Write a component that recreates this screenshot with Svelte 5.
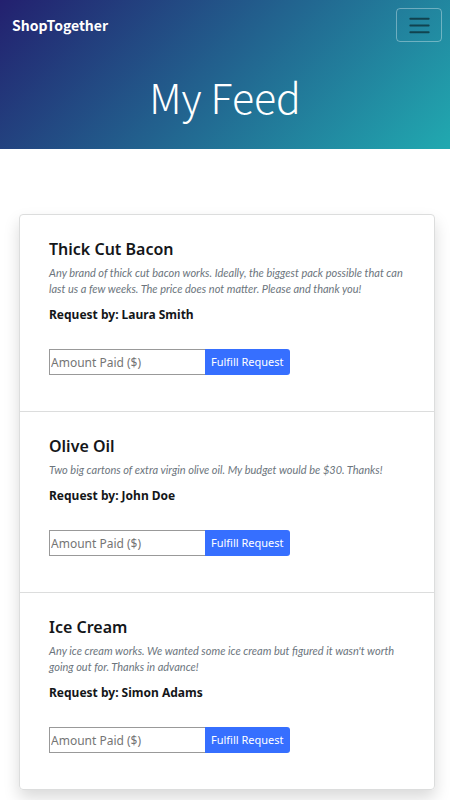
<script>
  const requests = [
    {
      id: 1,
      item: 'Thick Cut Bacon',
      details:
        'Any brand of thick cut bacon works. Ideally, the biggest pack possible that can last us a few weeks. The price does not matter. Please and thank you!',
      name: 'Laura Smith'
    },
    {
      id: 2,
      item: 'Olive Oil',
      details: 'Two big cartons of extra virgin olive oil. My budget would be $30. Thanks!',
      name: 'John Doe'
    },
    {
      id: 3,
      item: 'Ice Cream',
      details:
        "Any ice cream works. We wanted some ice cream but figured it wasn't worth going out for. Thanks in advance!",
      name: 'Simon Adams'
    }
  ];
</script>

<header>
  <nav>
    <a class="brand" href="#home">ShopTogether</a>
    <button class="toggler" type="button" aria-label="Toggle navigation">
      <svg viewBox="0 0 30 30" width="25" height="25" aria-hidden="true">
        <path d="M4 7h22M4 15h22M4 23h22" />
      </svg>
    </button>
  </nav>
  <h1>My Feed</h1>
</header>

<main>
  <ul class="feed">
    {#each requests as request (request.id)}
      <li>
        <h2>{request.item}</h2>
        <p class="details">{request.details}</p>
        <h3>Request by: {request.name}</h3>
        <form onsubmit={(event) => event.preventDefault()}>
          <input type="text" aria-label="Amount paid for {request.item}" placeholder="Amount Paid ($)" />
          <button type="submit">Fulfill Request</button>
        </form>
      </li>
    {/each}
  </ul>
</main>

<style>
  :global(body) {
    margin: 0;
    background: #fff;
    color: #141619;
    font-family: 'Noto Sans', 'Open Sans', sans-serif;
  }

  header {
    padding-bottom: 16px;
    background: linear-gradient(135deg, #23206f, #21a9b0);
    color: #fff;
    font-family: 'Noto Sans CJK SC', 'Noto Sans', sans-serif;
  }

  nav {
    display: flex;
    align-items: center;
    justify-content: space-between;
    padding: 8px 8px 8px 12px;
  }

  .brand {
    color: #fff;
    font-size: 14px;
    font-weight: 700;
    line-height: 24px;
    text-decoration: none;
  }

  .toggler {
    display: flex;
    align-items: center;
    justify-content: center;
    box-sizing: border-box;
    width: 46px;
    height: 34px;
    padding: 0;
    border: 1px solid rgba(255, 255, 255, 0.35);
    border-radius: 4px;
    background: transparent;
  }

  .toggler path {
    fill: none;
    stroke: rgba(0, 0, 0, 0.5);
    stroke-width: 2.4;
    stroke-linecap: round;
  }

  h1 {
    margin: 0;
    padding: 18px 0 9px;
    font-size: 41px;
    font-weight: 300;
    line-height: 56px;
    text-align: center;
  }

  main {
    padding: 65px 15px 10px 19px;
  }

  .feed {
    margin: 0;
    padding: 0;
    border: 1px solid #dcdddd;
    border-radius: 4px;
    box-shadow: 0 8px 16px rgba(0, 0, 0, 0.15);
    list-style: none;
  }

  li {
    padding: 23px 29px 36px;
  }

  li + li {
    border-top: 1px solid #dcdddd;
  }

  h2 {
    margin: 0 0 5px;
    font-size: 16px;
    font-weight: 600;
    line-height: 22px;
  }

  .details {
    margin: 0 0 8px;
    color: #6c757d;
    font-family: Lato, 'Noto Sans', sans-serif;
    font-size: 11px;
    font-style: italic;
    line-height: 16px;
  }

  h3 {
    margin: 0 0 24px;
    font-size: 12px;
    font-weight: 700;
    line-height: 20px;
  }

  form {
    display: flex;
  }

  input {
    box-sizing: border-box;
    width: 156px;
    height: 26px;
    padding: 0 1px;
    border: 1px solid #999;
    border-right: 0;
    border-radius: 0;
    background: #fff;
    font: 12px/24px 'Noto Sans', sans-serif;
  }

  input::placeholder {
    color: #757575;
    opacity: 1;
  }

  form button {
    height: 26px;
    padding: 0 6px;
    border: 0;
    border-radius: 0 3px 3px 0;
    background: #366fff;
    color: #fff;
    font: 11px/26px 'Noto Sans', sans-serif;
    white-space: nowrap;
  }
</style>
